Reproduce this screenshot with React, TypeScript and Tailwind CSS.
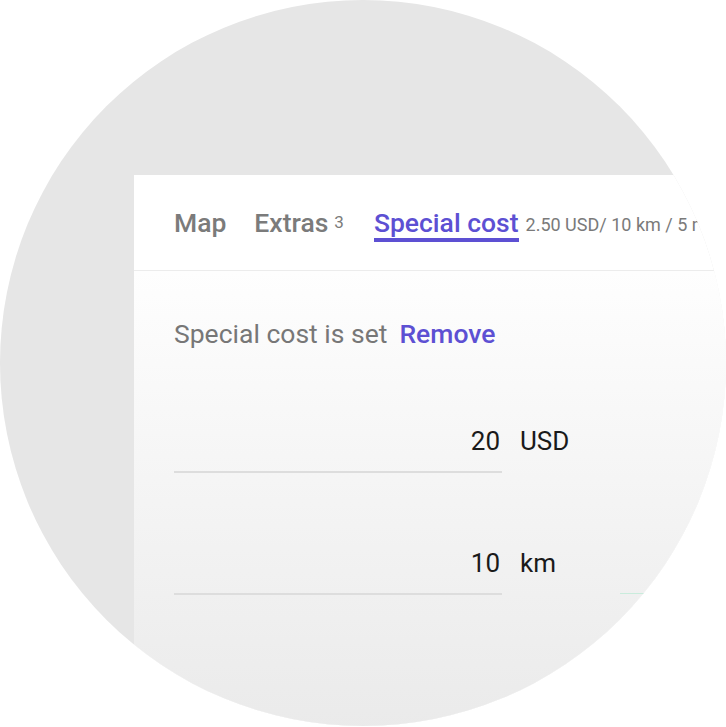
export default function App() {
  return (
    <div className="w-[726px] h-[727px] bg-white font-['Roboto',sans-serif]">
      <div className="w-[726px] h-[726px] rounded-full overflow-hidden bg-[#e6e6e6] pl-[134px] pt-[175px]">
        <div className="w-[700px] h-[560px] flex flex-col bg-white">
          {/* Tabs */}
          <div className="h-[96px] shrink-0 border-b border-[#ececec] pl-[40px] pt-[33px]">
            <div className="w-[524px] overflow-hidden whitespace-nowrap flex items-start text-[26.5px] leading-[30px] font-medium">
              <span className="text-[#7b7b7b]">Map</span>
              <span className="ml-[28px] text-[#7b7b7b]">Extras</span>
              <span className="ml-[6px] text-[17px] leading-[26px] pt-[1px] font-normal text-[#7b7b7b]">3</span>
              <span className="ml-[30px] text-[#5d50d3] border-b-4 border-[#5d50d3]">Special cost</span>
              <span className="ml-[7px] text-[18px] leading-[30px] pt-[2px] font-normal text-[#7a7a7a]">
                2.50 USD/ 10 km / 5 min
              </span>
            </div>
          </div>

          {/* Body */}
          <div className="flex-1 bg-gradient-to-b from-[#fefefe] to-[#eaeaea] px-[40px] pt-[48px]">
            <div className="flex text-[26.5px] leading-[30px]">
              <span className="text-[#777777]">Special cost is set</span>
              <button className="ml-[12px] font-medium text-[#5d50d3]">Remove</button>
            </div>

            <div className="mt-[77px] flex items-start text-[26px] leading-[30px] text-[#1a1a1a]">
              <div className="w-[328px] text-right pr-[2px] pb-[15px] border-b-2 border-[#dddddd]">20</div>
              <span className="ml-[18px]">USD</span>
            </div>

            <div className="mt-[75px] flex items-start text-[26px] leading-[30px] text-[#1a1a1a]">
              <div className="w-[328px] text-right pr-[2px] pb-[15px] border-b-2 border-[#dddddd]">10</div>
              <span className="ml-[18px] w-[80px]">km</span>
              <div className="ml-[20px] mt-[45px] w-[120px] border-b border-[#c9ecdc]" />
            </div>
          </div>
        </div>
      </div>
    </div>
  )
}
